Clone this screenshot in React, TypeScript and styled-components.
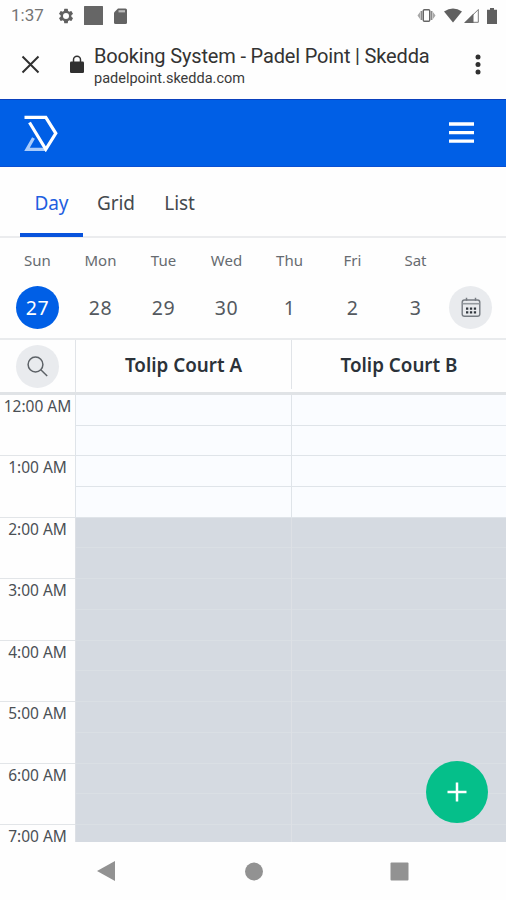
import React from "react";
import styled, { createGlobalStyle } from "styled-components";

const GlobalStyle = createGlobalStyle`
  *, *::before, *::after { box-sizing: border-box; }
  html, body { margin: 0; padding: 0; background: #fff; }
  body { font-family: "Noto Sans", "Open Sans", sans-serif; color: #454b52; }
  svg { display: block; flex: none; }
  button { border: 0; padding: 0; margin: 0; background: none; font: inherit; color: inherit; }
`;

const Screen = styled.div`
  width: 506px;
  height: 900px;
  overflow: hidden;
  display: flex;
  flex-direction: column;
  background: #fefefe;
`;

const StatusBar = styled.div`
  height: 31px;
  flex: none;
  display: flex;
  align-items: center;
  justify-content: space-between;
  padding: 0 9px 0 11px;
  color: #616161;
`;

const StatusGroup = styled.div<{ $gap: number }>`
  display: flex;
  align-items: center;
  gap: ${(p) => p.$gap}px;
`;

const Clock = styled.span`
  font: 400 17px/31px Roboto, sans-serif;
  color: #757575;
  width: 46px;
`;

const BrowserBar = styled.header`
  height: 68px;
  flex: none;
  display: flex;
  align-items: flex-start;
  padding: 13px 25px 0 21px;
`;

const IconSlot = styled.button<{ $width: number; $top: number }>`
  width: ${(p) => p.$width}px;
  padding-top: ${(p) => p.$top}px;
  flex: none;
`;

const PageInfo = styled.div`
  flex: 1;
  min-width: 0;
  font-family: Roboto, sans-serif;
  white-space: nowrap;
`;

const PageTitle = styled.div`
  font-size: 20px;
  line-height: 24px;
  letter-spacing: -0.16px;
  color: #333;
`;

const PageHost = styled.div`
  font-size: 14.5px;
  line-height: 21px;
  color: #3a3a3a;
`;

const AppBar = styled.div`
  height: 68px;
  flex: none;
  display: flex;
  align-items: center;
  justify-content: space-between;
  padding: 0 32px 0 24px;
  background: #005fe6;
  border-top: 1px solid #0a40bd;
  border-bottom: 1px solid #0b50d2;
`;

const Tabs = styled.nav`
  height: 71px;
  flex: none;
  display: flex;
  padding-left: 20px;
  border-bottom: 2px solid #ebecee;
`;

const Tab = styled.button<{ $active?: boolean; $width: number }>`
  width: ${(p) => p.$width}px;
  height: 70px;
  padding-top: 5px;
  font-size: 19px;
  letter-spacing: -0.1px;
  color: ${(p) => (p.$active ? "#1f5fe0" : "#45494e")};
  border-bottom: 4px solid ${(p) => (p.$active ? "#0853dc" : "transparent")};
`;

const Week = styled.div`
  height: 100px;
  flex: none;
  display: flex;
  padding-left: 6px;
  color: #666b70;
`;

const DayColumn = styled.div`
  width: 63px;
  display: flex;
  flex-direction: column;
  align-items: center;
`;

const DayName = styled.div`
  height: 48px;
  padding-top: 10px;
  font-size: 15px;
  line-height: 24px;
`;

const RoundButton = styled.button<{ $active?: boolean; $plain?: boolean }>`
  width: 43px;
  height: 43px;
  flex: none;
  display: flex;
  align-items: center;
  justify-content: center;
  border-radius: 50%;
  font-size: 19.5px;
  letter-spacing: 0.5px;
  color: ${(p) => (p.$active ? "#fff" : "#54595f")};
  background: ${(p) => (p.$active ? "#005fe6" : p.$plain ? "transparent" : "#e9ebee")};
`;

const CalendarSlot = styled.div`
  padding: 48px 0 0 2px;
`;

const CourtHeader = styled.div`
  height: 57px;
  flex: none;
  display: grid;
  grid-template-columns: 75px 216px 215px;
  border-top: 2px solid #e9ebed;
  border-bottom: 3px solid #e0e3e6;
`;

const SearchCell = styled.div`
  display: flex;
  padding: 5px 0 0 16px;
`;

const CourtName = styled.div`
  display: flex;
  align-items: center;
  justify-content: center;
  padding-bottom: 2px;
  border-left: 1px solid #e1e4e8;
  font-size: 18.8px;
  font-weight: 600;
  color: #2b3239;

  &:last-child {
    margin-bottom: 3px;
    padding-bottom: 0;
  }
`;

const Schedule = styled.main`
  flex: 1;
  min-height: 0;
  overflow: hidden;
  position: relative;
`;

const HourRow = styled.div<{ $closed: boolean }>`
  display: grid;
  grid-template-columns: 75px 216px 215px;
  height: 61.5px;
  background: ${(p) =>
    p.$closed
      ? "linear-gradient(90deg, #fefefe 75px, #d5dae1 75px)"
      : "linear-gradient(90deg, #fefefe 75px, #fafcff 75px)"};

  &:first-child {
    height: 61px;
  }
`;

const HourLabel = styled.div`
  padding-top: 1px;
  text-align: center;
  font-size: 15.5px;
  line-height: 20px;
  white-space: nowrap;
  color: #4b5055;
  border-bottom: 1.5px solid #e2e5e8;
`;

const Slot = styled.div<{ $closed: boolean }>`
  display: grid;
  grid-template-rows: 1fr 1fr;
  border-left: 1px solid ${(p) => (p.$closed ? "#dde0e5" : "#dfe4e9")};
`;

const HalfHour = styled.div<{ $closed: boolean }>`
  border-bottom: 1px solid ${(p) => (p.$closed ? "#dadfe4" : "#dfe4e9")};
`;

const AddButton = styled.button`
  position: absolute;
  right: 18px;
  bottom: 19px;
  width: 62px;
  height: 62px;
  display: flex;
  align-items: center;
  justify-content: center;
  border-radius: 50%;
  background: #05bf8a;
`;

const NavBar = styled.footer`
  height: 58px;
  flex: none;
  display: flex;
  align-items: center;
  justify-content: space-between;
  padding: 0 97px;
`;

const GearIcon = () => (
  <svg width="18" height="18" viewBox="0 0 24 24">
    <path fill="#606060" fillRule="evenodd" d="M19.14 12.94c.04-.3.06-.61.06-.94s-.02-.64-.07-.94l2.03-1.58a.5.5 0 0 0 .12-.61l-1.92-3.32a.5.5 0 0 0-.59-.22l-2.39.96a7 7 0 0 0-1.62-.94L14.4 2.81a.5.5 0 0 0-.48-.41h-3.84a.5.5 0 0 0-.47.41l-.36 2.54a7 7 0 0 0-1.62.94l-2.39-.96a.5.5 0 0 0-.59.22L2.74 8.87a.5.5 0 0 0 .12.61l2.03 1.58a7 7 0 0 0 0 1.88l-2.03 1.58a.5.5 0 0 0-.12.61l1.92 3.32c.12.22.37.29.59.22l2.39-.96c.5.38 1.03.7 1.62.94l.36 2.54c.05.24.24.41.48.41h3.84c.24 0 .44-.17.47-.41l.36-2.54a7 7 0 0 0 1.62-.94l2.39.96c.22.08.47 0 .59-.22l1.92-3.32a.5.5 0 0 0-.12-.61zM12 16a4 4 0 1 1 0-8 4 4 0 0 1 0 8z" />
  </svg>
);

const SquareIcon = () => (
  <svg width="19" height="19" viewBox="0 0 19 19">
    <rect width="19" height="19" rx=".5" fill="#666" />
  </svg>
);

const SdCardIcon = () => (
  <svg width="13" height="16" viewBox="0 0 13 16">
    <path d="M4 .5h7.5A1.5 1.5 0 0 1 13 2v12.5a1.5 1.5 0 0 1-1.500 1.500h-10A1.500 1.500 0 0 1 0 14.500V4.500z" fill="#636363" />
    <path d="M4.500 3.300h6.500" stroke="#bbb" strokeWidth="2.200" />
  </svg>
);

const VibrateIcon = () => (
  <svg width="19" height="15" viewBox="0 0 19 15">
    <rect x="6.300" y="1.700" width="6.400" height="11.600" rx="1" fill="#fff" stroke="#666" strokeWidth="1.400" />
    <path d="M4.500 3v9M14.500 3v9" stroke="#8b8b8b" strokeWidth="1.800" />
    <path d="M3.200 3.800v7.400L.5 7.500zM15.800 3.800v7.400l2.700-3.700z" fill="#a8a8a8" />
  </svg>
);

const WifiIcon = () => (
  <svg width="18" height="15" viewBox="0 0 18 15">
    <path d="M0 3.500Q9-2.700 18 3.500L9 14.500z" fill="#606060" />
  </svg>
);

const SignalIcon = () => (
  <svg width="15" height="15" viewBox="0 0 15 15">
    <path d="M1.500 14.300 14.300 1.500v12.800z" fill="#fff" stroke="#777" />
    <path d="M0 15 9.500 5.500V15z" fill="#666" />
  </svg>
);

const BatteryIcon = () => (
  <svg width="10" height="16" viewBox="0 0 10 16">
    <path d="M3 0h4v1.800h3V16H0V1.800h3z" fill="#606060" />
  </svg>
);

const CloseIcon = () => (
  <svg width="19" height="19" viewBox="0 0 19 19">
    <path d="m1.500 1.500 16 16m0-16-16 16" stroke="#303030" strokeWidth="2" />
  </svg>
);

const LockIcon = () => (
  <svg width="14" height="18" viewBox="0 0 14 18">
    <path d="M3.500 7V4.800a3.500 3.500 0 0 1 7 0V7" fill="none" stroke="#333" strokeWidth="1.500" />
    <rect y="6.500" width="14" height="11.500" rx="1.300" fill="#303030" />
  </svg>
);

const MoreIcon = () => (
  <svg width="6" height="21" viewBox="0 0 6 21">
    <circle cx="3" cy="3" r="2.500" fill="#303030" />
    <circle cx="3" cy="10.500" r="2.500" fill="#303030" />
    <circle cx="3" cy="18" r="2.500" fill="#303030" />
  </svg>
);

const Logo = () => (
  <svg width="34" height="38" viewBox="0 0 34 38" fill="none">
    <path d="M9.500 24 3 35.400h18" stroke="#a9ccfb" strokeWidth="3.200" />
    <path d="M.5 3.300h21.300l10 16-10 16L5.500 8.500" stroke="#fff" strokeWidth="3.200" />
  </svg>
);

const MenuIcon = () => (
  <svg width="25" height="22" viewBox="0 0 25 22">
    <path d="M0 2h25M0 10.600h25M0 19.200h25" stroke="#fff" strokeWidth="3.300" />
  </svg>
);

const CalendarIcon = () => (
  <svg width="20" height="21" viewBox="0 0 20 21">
    <rect x="1.200" y="3" width="17.600" height="16.300" rx="2.300" fill="none" stroke="#777c82" strokeWidth="1.400" />
    <path d="M1.500 6.700h17" stroke="#959a9f" strokeWidth="1.600" />
    <path d="M5.500.8v3M14.500.8v3" stroke="#777c82" strokeWidth="1.500" />
    <path d="M5 11.700h2.300M8.900 11.700h2.300M12.800 11.700h2.300M5 15.300h2.300M8.900 15.300h2.300M12.800 15.300h2.300" stroke="#30363c" strokeWidth="2.300" />
  </svg>
);

const SearchIcon = () => (
  <svg width="21" height="21" viewBox="0 0 21 21" fill="none" stroke="#5d6267" strokeWidth="1.500">
    <circle cx="8.500" cy="8.500" r="7.400" />
    <path d="m13.800 13.800 6.400 6.200" />
  </svg>
);

const PlusIcon = () => (
  <svg width="20" height="20" viewBox="0 0 20 20">
    <path d="M10 .5v19M.5 10h19" stroke="#fff" strokeWidth="2.500" />
  </svg>
);

const BackIcon = () => (
  <svg width="19" height="20" viewBox="0 0 19 20">
    <path d="M18 0v20L0 10z" fill="#929292" />
  </svg>
);

const HomeIcon = () => (
  <svg width="19" height="19" viewBox="0 0 19 19">
    <circle cx="10" cy="9.500" r="9" fill="#929292" />
  </svg>
);

const RecentsIcon = () => (
  <svg width="19" height="19" viewBox="0 0 19 19">
    <rect x=".5" y=".5" width="18" height="18" rx="1" fill="#929292" />
  </svg>
);

const days = [
  { name: "Sun", date: 27 },
  { name: "Mon", date: 28 },
  { name: "Tue", date: 29 },
  { name: "Wed", date: 30 },
  { name: "Thu", date: 1 },
  { name: "Fri", date: 2 },
  { name: "Sat", date: 3 },
];

const hours = ["12:00 AM", "1:00 AM", "2:00 AM", "3:00 AM", "4:00 AM", "5:00 AM", "6:00 AM", "7:00 AM"];
const courts = ["Tolip Court A", "Tolip Court B"];
const CLOSED_FROM = 2;

export default function App() {
  return (
    <Screen>
      <GlobalStyle />
      <StatusBar>
        <StatusGroup $gap={11}>
          <StatusGroup $gap={9}>
            <StatusGroup $gap={0}>
              <Clock>1:37</Clock>
              <GearIcon />
            </StatusGroup>
            <SquareIcon />
          </StatusGroup>
          <SdCardIcon />
        </StatusGroup>
        <StatusGroup $gap={8}>
          <VibrateIcon />
          <StatusGroup $gap={2}>
            <WifiIcon />
            <SignalIcon />
          </StatusGroup>
          <BatteryIcon />
        </StatusGroup>
      </StatusBar>
      <BrowserBar>
        <IconSlot $width={49} $top={11} aria-label="Close">
          <CloseIcon />
        </IconSlot>
        <IconSlot $width={24} $top={11} aria-label="Secure">
          <LockIcon />
        </IconSlot>
        <PageInfo>
          <PageTitle>Booking System - Padel Point | Skedda</PageTitle>
          <PageHost>padelpoint.skedda.com</PageHost>
        </PageInfo>
        <IconSlot $width={6} $top={10} aria-label="More">
          <MoreIcon />
        </IconSlot>
      </BrowserBar>
      <AppBar>
        <Logo />
        <MenuIcon />
      </AppBar>
      <Tabs>
        <Tab $active $width={63}>Day</Tab>
        <Tab $width={66}>Grid</Tab>
        <Tab $width={61}>List</Tab>
      </Tabs>
      <Week>
        {days.map((day, i) => (
          <DayColumn key={day.name}>
            <DayName>{day.name}</DayName>
            <RoundButton $active={i === 0} $plain={i !== 0}>{day.date}</RoundButton>
          </DayColumn>
        ))}
        <CalendarSlot>
          <RoundButton aria-label="Calendar">
            <CalendarIcon />
          </RoundButton>
        </CalendarSlot>
      </Week>
      <CourtHeader>
        <SearchCell>
          <RoundButton aria-label="Search">
            <SearchIcon />
          </RoundButton>
        </SearchCell>
        {courts.map((court) => (
          <CourtName key={court}>{court}</CourtName>
        ))}
      </CourtHeader>
      <Schedule>
        {hours.map((hour, i) => {
          const closed = i >= CLOSED_FROM;
          return (
            <HourRow key={hour} $closed={closed}>
              <HourLabel>{hour}</HourLabel>
              {courts.map((court) => (
                <Slot key={court} $closed={closed}>
                  <HalfHour $closed={closed} />
                  <HalfHour $closed={closed} />
                </Slot>
              ))}
            </HourRow>
          );
        })}
        <AddButton aria-label="Add booking">
          <PlusIcon />
        </AddButton>
      </Schedule>
      <NavBar>
        <BackIcon />
        <HomeIcon />
        <RecentsIcon />
      </NavBar>
    </Screen>
  );
}
